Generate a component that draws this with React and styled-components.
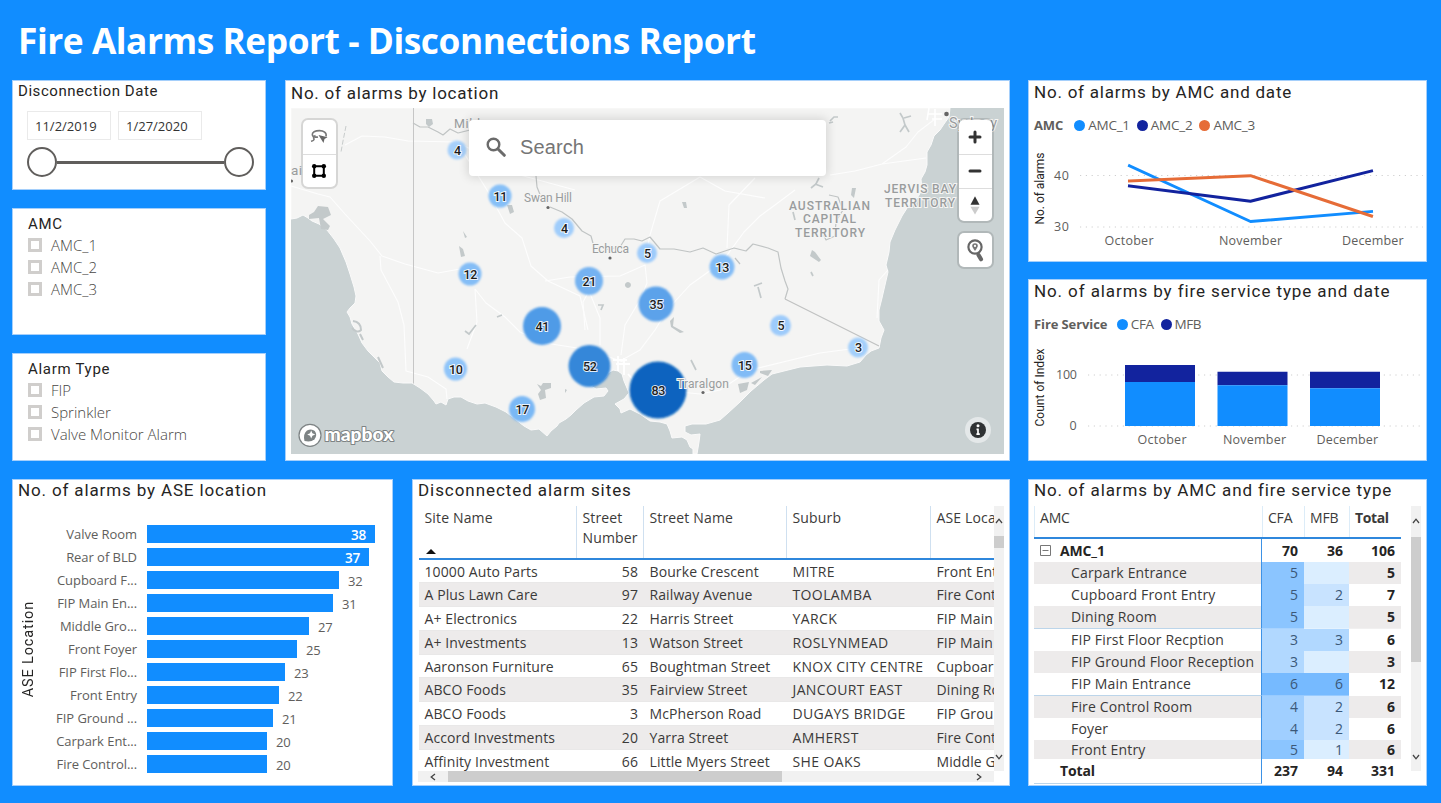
import React from "react";
import styled, { createGlobalStyle } from "styled-components";

const BLUE = "#118dff";
const NAVY = "#12239e";
const ORANGE = "#e66c37";
const UI = `"Open Sans", "Noto Sans", sans-serif`;
const DIN = `Roboto, "Liberation Sans", sans-serif`;

const GlobalStyle = createGlobalStyle`
  *, *::before, *::after { box-sizing: border-box; }
  body { margin: 0; background: ${BLUE}; overflow: hidden; }
`;

/* ---------- page frame ---------- */

const Page = styled.div`
  width: 1441px;
  height: 803px;
  display: flex;
  flex-direction: column;
  background: ${BLUE};
  font-family: ${UI};
`;

const Header = styled.header`
  height: 80px;
  flex: none;
  padding: 0 0 0 18px;
  display: flex;
  align-items: center;
`;

const Heading = styled.h1`
  margin: 0;
  font: 700 35.3px/48px ${UI};
  letter-spacing: -0.46px;
  color: #fff;
  white-space: nowrap;
`;

const Main = styled.main`
  display: flex;
  gap: 18px;
  height: 707px;
  padding: 0 14px 0 12px;
`;

const Wide = styled.div`
  width: 998px;
  display: grid;
  grid-template-rows: 381px 307px;
  row-gap: 18px;
`;

const TopRow = styled.div`
  display: grid;
  grid-template-columns: 254px 725px;
  column-gap: 19px;
`;

const BottomRow = styled.div`
  display: grid;
  grid-template-columns: 381px 598px;
  column-gap: 19px;
`;

const Filters = styled.div`
  display: grid;
  grid-template-rows: 110px 127px 108px;
  row-gap: 18px;
`;

const Side = styled.div`
  width: 399px;
  display: grid;
  grid-template-rows: 182px 183px 307px;
  row-gap: 17px;

  > :nth-child(2) { margin-bottom: 1px; }
`;

const Panel = styled.section`
  min-width: 0;
  overflow: hidden;
  background: #fff;
  border: 1px solid #a5cffb;
  display: flex;
  flex-direction: column;
`;

const Title = styled.h2`
  flex: none;
  margin: 0;
  padding: 0 0 0 ${(p) => p.$left ?? 5}px;
  height: ${(p) => p.$height ?? 24}px;
  font: 400 ${(p) => p.$size ?? 17}px/${(p) => p.$line ?? 22}px ${DIN};
  letter-spacing: ${(p) => p.$spacing ?? 0.75}px;
  color: #252423;
  white-space: nowrap;
`;

/* ---------- slicers ---------- */

const DateFields = styled.div`
  display: flex;
  gap: 7px;
  padding: 10px 0 0 14px;
`;

const DateField = styled.div`
  width: 84px;
  height: 29px;
  border: 1px solid #eaeaea;
  padding-left: 7px;
  font: 400 13px/28px ${UI};
  letter-spacing: 0;
  color: #333;
`;

const Range = styled.div`
  display: flex;
  align-items: center;
  width: 227px;
  margin: 7px 0 0 14px;
`;

const Handle = styled.span`
  width: 30px;
  height: 30px;
  flex: none;
  border: 2px solid #605e5c;
  border-radius: 50%;
  background: #fff;
`;

const Track = styled.span`
  flex: 1;
  height: 3px;
  background: #605e5c;
`;

const Options = styled.ul`
  list-style: none;
  margin: 0;
  padding: 0 0 0 15px;
`;

const Option = styled.li`
  display: flex;
  align-items: center;
  gap: 9px;
  height: 22px;
  font: 300 15px/20px ${UI};
  color: #484644;
`;

const Box = styled.span`
  width: 14px;
  height: 14px;
  border: 3px solid #d0cecc;
`;

function Slicer({ title, options }) {
  return (
    <Panel>
      <Title $left={15} $size={15} $line={30} $height={25} $spacing={0.7}>
        {title}
      </Title>
      <Options>
        {options.map((o) => (
          <Option key={o}>
            <Box />
            {o}
          </Option>
        ))}
      </Options>
    </Panel>
  );
}

/* ---------- map ---------- */

const MapFrame = styled.div`
  position: relative;
  width: 713px;
  height: 346px;
  margin: 3px 0 0 5px;
  overflow: hidden;
  background: #cad2d3;

  > svg { display: block; }
`;

const SearchBox = styled.div`
  position: absolute;
  left: 178px;
  top: 12px;
  width: 357px;
  height: 56px;
  display: flex;
  align-items: center;
  gap: 14px;
  padding: 0 0 2px 17px;
  border-radius: 4px;
  background: #fff;
  box-shadow: 0 0 10px 2px rgba(0, 0, 0, 0.12);
  font: 400 20px/54px "Liberation Sans", sans-serif;
  letter-spacing: 0.1px;
  color: #757575;
`;

const ControlGroup = styled.div`
  position: absolute;
  left: ${(p) => p.$left}px;
  top: ${(p) => p.$top}px;
  width: 33px;
  border-radius: 5px;
  background: #fff;
  box-shadow: 0 0 0 2px rgba(0, 0, 0, 0.12);
  overflow: hidden;
`;

const Control = styled.div`
  height: ${(p) => p.$height ?? 34}px;
  display: flex;
  align-items: center;
  justify-content: center;
  padding: 0 1px 1px 0;

  & + & { border-top: 1px solid #ddd; }
`;

const Info = styled.div`
  position: absolute;
  left: 674px;
  top: 309px;
  width: 26px;
  height: 26px;
  border-radius: 50%;
  background: #e4e8e9;
  display: flex;
  align-items: center;
  justify-content: center;
`;

const LAND =
  "M291 219L297 218L303 215L308 218L312 221L319 224L327 230L334 239L340 248L346 262L350 274L354 287L356 296L355 303L350 308L347 312L350 317L352 324L358 334L362 343L368 351L374 357L380 363L382 371L388 377L394 382L403 383L412 383L420 388L428 394L434 401L436 404L441 402L446 405L448 399L454 397L461 397L468 401L477 404L485 403L496 407L506 412L515 419L524 426L531 430L539 429L547 436L551 431L557 426L559 423L566 419L571 415L576 410L584 403L594 397L604 396L608 391L606 388L596 389L591 386L600 382L606 377L608 373L613 370L618 371L622 374L624 381L627 388L629 393L624 399L615 404L620 409L621 413L630 409L640 414L650 421L660 422L667 424L670 431L672 438L682 437L687 440L690 447L693 449L693 454L697 454L699 442L700 434L691 435L685 432L685 426L692 424L706 424L720 420L728 413L740 402L751 391L764 380L772 374L784 371L800 367L827 365L847 366L860 362L866 355L871 351L879 348L881 338L884 330L879 321L879 310L882 298L885 285L888 272L886 265L889 252L890 242L895 230L902 216L909 205L916 200L922 190L921 179L925 172L927 165L927 152L931 145L934 136L940 130L944 124L949 117L950 108H291Z";

const ROADS = [
  "M291 186L318 194L330 197L345 214L370 241L382 256L405 264L438 273L460 269",
  "M345 145L362 136L385 137L408 141L457 142L520 175L575 190",
  "M457 142L487 190L505 223L522 238L531 266L548 281L580 296L588 330",
  "M380 256L381 270L398 302L404 325L406 371L428 377L446 389L447 399",
  "M475 289L486 303L505 317L520 332L545 343L590 350L623 362",
  "M475 289L477 322L467 349M545 281L570 277L620 276L645 265L647 283L640 300L625 325L621 355",
  "M622 360L640 350L655 330L668 309L690 285L722 262L744 232L760 216L775 205L795 190",
  "M700 177L660 201L650 235L645 260M700 177L725 191L765 198M727 248L729 205L755 178",
  "M830 175L855 171L882 164L906 147L918 132L935 119M882 164L926 158",
  "M585 330L583 302L589 291L600 318L600 345M660 390L700 394L720 390L750 370L820 353L850 349",
  "M888 270L879 280L877 318",
];

const RIVERS = [
  "M413 123L420 127L428 127L438 132L443 135L450 129L458 133L470 130",
  "M536 176L537 187L541 197M550 207L562 212L572 219L582 231L591 236L594 247L602 252",
  "M604 250L620 247L625 239L634 239L642 241L650 237L660 249L674 249L690 252L703 248L716 254L734 248L746 251L753 244L768 248L778 252L781 268L785 281L788 289L785 299",
  "M735 258L740 264M829 195L838 197L843 210L836 221L835 236L826 240L820 227",
];

const LAKES = [
  "M319 218L309 219L309 215L314 212L318 206L328 207L331 215L323 219L330 226L328 230L321 229Z",
  "M426 119L432 119L433 124L429 127L426 124ZM507 205L512 205L514 212L510 214ZM463 231L467 237L465 238ZM459 246L463 249L465 256L461 257Z",
  "M537 384L541 386L543 383L551 383L551 388L545 390L546 398L540 400L538 394L541 390ZM565 389L567 390L565 393ZM628 282A3 3 0 1 1 627.9 282Z",
  "M670 321L674 317L673 326L684 332L680 333L671 327ZM738 384L749 382L747 390L740 393ZM751 383L762 377L755 385ZM760 371L772 370L768 376L760 373Z",
  "M682 202L686 202L687 208L684 208ZM852 188L856 188L854 198L851 195ZM812 250L815 252L821 260L819 262L810 256Z",
];

const CREEKS =
  "M830 121L834 117L838 117M833 122L829 123M900 113L903 118L905 125L900 132M904 118L911 116M905 125L909 132M811 188L816 184L819 178M815 184L823 187M793 212L795 220M811 272L813 276M754 286L762 283M758 287L761 298M598 305L603 305L601 310M465 331L469 334L476 325M497 317L502 315M691 360L696 370";

const CLUSTERS = [
  [457, 150, 4, 10, "#a6d0fb"],
  [500, 196, 11, 12, "#86bff7"],
  [564, 228, 4, 10.5, "#a0cdfb"],
  [470, 274, 12, 12, "#84bdf6"],
  [589, 281, 21, 14.5, "#74b2f1"],
  [647, 253, 5, 10.5, "#9dcbfb"],
  [722, 267, 13, 13, "#82bcf6"],
  [656, 304, 35, 18, "#5ba2ea"],
  [542, 326, 41, 19.5, "#4f9be7"],
  [589.5, 366, 52, 21.5, "#3587d9"],
  [658, 390, 83, 29, "#0764bf"],
  [455.5, 369, 10, 12, "#8fc4f9"],
  [522, 409, 17, 13.5, "#7ab8f5"],
  [780.5, 325.5, 5, 11, "#9dcbfb"],
  [744.5, 365, 15, 13.5, "#80bbf6"],
  [858, 347.5, 3, 10.5, "#a3cffb"],
];

function Label({ x, y, w, children, size = 12, weight = 400, fill = "#999c9d" }) {
  return (
    <text
      x={x}
      y={y}
      textLength={w}
      fontFamily={DIN}
      fontSize={size}
      fontWeight={weight}
      fill={fill}
      stroke="#f5f5f4"
      strokeWidth="2"
      paintOrder="stroke"
    >
      {children}
    </text>
  );
}

function MapDrawing() {
  return (
    <svg width="713" height="346" viewBox="291 108 713 346">
      <defs>
        <filter id="soft" x="-20%" y="-20%" width="140%" height="140%">
          <feGaussianBlur stdDeviation="1.1" />
        </filter>
      </defs>
      <path d={LAND} fill="#f4f4f3" stroke="#fafafa" strokeWidth="1" />
      <g fill="none" stroke="#fdfdfd" strokeWidth="1.1" strokeLinejoin="round">
        {ROADS.map((d) => <path key={d} d={d} />)}
      </g>
      <g fill="none" stroke="#fff">
        <path d="M613 360H627M616 364H630M618 356V371M624 358V375M628 374L636 383" strokeWidth="1.8" />
        <path d="M928 114H942M932 119H942M935 109V126M929 108L927 120" strokeWidth="1.6" />
      </g>
      <path d="M413.5 108V383.5" stroke="#c6c6c6" fill="none" />
      <path d="M785 299L879 346" stroke="#bfc0c0" fill="none" strokeWidth="1.2" />
      <path d="M346 126L343 141L341 152" stroke="#c8cccc" fill="none" strokeDasharray="5 2" />
      <g fill="none" stroke="#c0c4c4" strokeWidth="1.2" strokeLinejoin="round">
        {RIVERS.map((d) => <path key={d} d={d} />)}
      </g>
      <g fill="#c3c9ca">
        {LAKES.map((d) => <path key={d} d={d} />)}
        <path d={CREEKS} fill="none" stroke="#c3c9ca" strokeWidth="1.7" />
        <path d="M353 321Q361 322 361 330Q357 334 352 328M360 334L363 340M378 357L383 368" fill="none" stroke="#c3c9ca" strokeWidth="2" />
      </g>

      {CLUSTERS.map(([x, y, n, r, fill]) => (
        <circle key={`${x}-${y}`} cx={x} cy={y} r={r - 0.5} fill={fill} filter="url(#soft)" />
      ))}

      <Label x={454} y={128} w={46} size={12.5}>Mildura</Label>
      <Label x={291} y={175} w={27} size={13.5}>aide</Label>
      <Label x={524} y={202} w={48}>Swan Hill</Label>
      <Label x={592} y={253} w={37}>Echuca</Label>
      <Label x={677} y={388} w={52}>Traralgon</Label>
      <Label x={949} y={128} w={48} size={14.5}>Sydney</Label>
      <Label x={789} y={210} w={81} weight={500}>AUSTRALIAN</Label>
      <Label x={803} y={223} w={53} weight={500}>CAPITAL</Label>
      <Label x={795} y={237} w={70} weight={500}>TERRITORY</Label>
      <Label x={884} y={193} w={72} weight={500}>JERVIS BAY</Label>
      <Label x={885} y={206.5} w={70} weight={500}>TERRITORY</Label>
      <g fill="#666">
        <circle cx="548" cy="207.5" r="1.6" />
        <circle cx="610" cy="258" r="1.6" />
        <circle cx="703" cy="392.5" r="1.6" />
        <circle cx="946.5" cy="114" r="2.3" />
        <circle cx="291.5" cy="181" r="1.6" />
      </g>

      {CLUSTERS.map(([x, y, n]) => (
        <text
          key={`${x}-${y}`}
          x={x + 0.3}
          y={y + 4.5}
          textAnchor="middle"
          fontFamily={DIN}
          fontWeight="500"
          fontSize="12.5"
          letterSpacing="-0.3"
          fill="#1c1c1c"
          stroke="#fff"
          strokeOpacity="0.85"
          strokeWidth="2"
          paintOrder="stroke"
        >
          {n}
        </text>
      ))}

      <g>
        <circle cx="310" cy="435.3" r="11" fill="#fff" stroke="#7d8384" strokeWidth="1.2" />
        <path d="M304.5 441Q302.8 434 307 430.6Q311.5 428 314.8 431Q317.8 435 314.5 439.3Q311 442.5 304.5 441Z" fill="#7d8384" />
        <path d="M311.2 430.5L312.4 433.3L315.2 434.5L312.4 435.7L311.2 438.5L310 435.7L307.2 434.5L310 433.3Z" fill="#fff" />
        <text
          x="324.5"
          y="440.5"
          textLength="69"
          lengthAdjust="spacingAndGlyphs"
          fontFamily="Lato, sans-serif"
          fontWeight="900"
          fontSize="18.5"
          fill="#fff"
          stroke="#7d8384"
          strokeWidth="2"
          strokeLinejoin="round"
          paintOrder="stroke"
        >
          mapbox
        </text>
      </g>
    </svg>
  );
}

function AlarmMap() {
  return (
    <Panel>
      <Title $line={24} $spacing={0.76}>No. of alarms by location</Title>
      <MapFrame>
        <MapDrawing />
        <SearchBox>
          <svg width="20" height="20" viewBox="0 0 20 20" fill="none" stroke="#6b6b6b">
            <circle cx="7.5" cy="7.5" r="5.8" strokeWidth="2.4" />
            <path d="M12 12L18.3 18.3" strokeWidth="3" strokeLinecap="round" />
          </svg>
          Search
        </SearchBox>
        <ControlGroup $left={12} $top={12}>
          <Control>
            <svg width="20" height="18" viewBox="0 0 20 18" fill="none" stroke="#777" strokeWidth="1.6">
              <path d="M17 8.5C18 4.8 14.5 2.6 10.5 2.6C6 2.6 3 4.3 3.3 6.8C3.6 9 7 9.4 9 9" />
              <path d="M6.5 7.5Q3.5 9 5 10.8Q5.5 12.5 2 13.2" />
              <path d="M9.5 7L18.5 9.3L15.5 11L14.5 15Z" fill="#666" stroke="none" />
            </svg>
          </Control>
          <Control $height={33}>
            <svg width="16" height="16" viewBox="0 0 16 16">
              <path d="M3.2 3.2H12.8V12.8H3.2Z" fill="none" stroke="#000" strokeWidth="2" />
              <g fill="#000">
                <circle cx="3.2" cy="3.2" r="2.2" />
                <circle cx="12.8" cy="3.2" r="2.2" />
                <circle cx="3.2" cy="12.8" r="2.2" />
                <circle cx="12.8" cy="12.8" r="2.2" />
              </g>
            </svg>
          </Control>
        </ControlGroup>
        <ControlGroup $left={668} $top={12}>
          <Control>
            <svg width="16" height="16" viewBox="0 0 16 16" stroke="#333" strokeWidth="3" strokeLinecap="round">
              <path d="M3 8H13M8 3V13" />
            </svg>
          </Control>
          <Control>
            <svg width="16" height="16" viewBox="0 0 16 16" stroke="#333" strokeWidth="3" strokeLinecap="round">
              <path d="M3 8H13" />
            </svg>
          </Control>
          <Control $height={33}>
            <svg width="12" height="20" viewBox="0 0 12 20">
              <path d="M1.5 9.8L6 1.3L10.5 9.8Z" fill="#333" />
              <path d="M1.5 11.8L6 19.5L10.5 11.8Z" fill="#ccc" />
            </svg>
          </Control>
        </ControlGroup>
        <ControlGroup $left={668} $top={125}>
          <Control>
            <svg width="20" height="24" viewBox="0 0 20 24" fill="none">
              <circle cx="10" cy="9" r="6.6" stroke="#666" strokeWidth="2.2" />
              <path d="M13.5 17L16 21.2" stroke="#666" strokeWidth="4.2" strokeLinecap="round" />
              <path d="M10 13Q7.2 9.2 7.2 8A2.8 2.8 0 0 1 12.8 8Q12.8 9.2 10 13Z" fill="#777" />
              <circle cx="10" cy="7.9" r="1.1" fill="#fff" />
            </svg>
          </Control>
        </ControlGroup>
        <Info>
          <svg width="16" height="16" viewBox="0 0 16 16">
            <circle cx="8" cy="8" r="8" fill="#2f3234" />
            <path d="M8 6.8V12.2M6.5 7.3H8.6M6.4 12.2H9.8" stroke="#fff" strokeWidth="1.7" />
            <circle cx="8" cy="3.7" r="1.5" fill="#fff" />
          </svg>
        </Info>
      </MapFrame>
    </Panel>
  );
}

/* ---------- horizontal bars ---------- */

const BarBody = styled.div`
  display: grid;
  grid-template-columns: 31px 83px 1fr;
  column-gap: 10px;
  padding-top: 20.5px;
`;

const AxisTitle = styled.div`
  writing-mode: vertical-rl;
  transform: rotate(180deg);
  justify-self: center;
  align-self: center;
  margin-top: -4px;
  font: 400 14.5px/18px ${DIN};
  letter-spacing: 0.85px;
  color: #252423;
`;

const BarLabel = styled.div`
  height: 23.05px;
  display: flex;
  justify-content: flex-end;
  font: 400 13px/19px ${UI};
  letter-spacing: -0.05px;
  color: #605e5c;
  white-space: nowrap;
`;

const BarTrack = styled.div`
  height: 23.05px;
  display: flex;
`;

const Bar = styled.div`
  height: 18px;
  background: ${BLUE};
  padding-right: 9px;
  text-align: right;
  font: 600 13.5px/21px ${UI};
  letter-spacing: -0.2px;
  color: #fff;
`;

const BarValue = styled.span`
  padding-left: 9px;
  font: 400 13px/20px ${UI};
  letter-spacing: -0.2px;
  color: #605e5c;
`;

const ASE = [
  ["Valve Room", 38],
  ["Rear of BLD", 37],
  ["Cupboard F...", 32],
  ["FIP Main En...", 31],
  ["Middle Gro...", 27],
  ["Front Foyer", 25],
  ["FIP First Flo...", 23],
  ["Front Entry", 22],
  ["FIP Ground ...", 21],
  ["Carpark Ent...", 20],
  ["Fire Control...", 20],
];

function AseChart() {
  return (
    <Panel>
      <Title $line={20} $spacing={0.86}>No. of alarms by ASE location</Title>
      <BarBody>
        <AxisTitle>ASE Location</AxisTitle>
        <div>
          {ASE.map(([name]) => <BarLabel key={name}>{name}</BarLabel>)}
        </div>
        <div>
          {ASE.map(([name, value]) => (
            <BarTrack key={name}>
              <Bar style={{ width: value * 6 }}>{value > 35 ? value : null}</Bar>
              {value > 35 ? null : <BarValue>{value}</BarValue>}
            </BarTrack>
          ))}
        </div>
      </BarBody>
    </Panel>
  );
}

/* ---------- shared scroll bar ---------- */

const ScrollY = styled.div`
  width: 10px;
  height: 265px;
  background: #f1f1f1;
  display: flex;
  flex-direction: column;
  justify-content: space-between;
  align-items: center;
  padding: 12px 0 11px;
  position: relative;

  &::after {
    content: "";
    position: absolute;
    left: 0;
    top: ${(p) => p.$thumbTop}px;
    width: 10px;
    height: ${(p) => p.$thumb}px;
    background: #cdcdcd;
  }
`;

function Chevron({ turn = 0 }) {
  return (
    <svg width="8" height="6" viewBox="0 0 8 6" fill="none" stroke="#444" strokeWidth="1.3" transform={`rotate(${turn})`}>
      <path d="M1 5L4 1.2L7 5" />
    </svg>
  );
}

/* ---------- sites table ---------- */

const TableArea = styled.div`
  display: grid;
  grid-template-columns: 576px 10px;
  grid-template-rows: 265px 11px;
  margin: 2px 0 0 5px;
`;

const Sites = styled.div`
  overflow: hidden;
  padding-left: 1px;
`;

const SiteRow = styled.div`
  display: grid;
  grid-template-columns: 158px 67px 143px 144px 120px;
  width: 632px;
  height: 23.75px;
  background: ${(p) => (p.$shade ? "#edebeb" : "#fff")};
  border-bottom: 1px solid #e9e8e8;
`;

const SiteHead = styled(SiteRow)`
  height: 53.6px;
  border-bottom: 2px solid #2f87dc;
`;

const HeadCell = styled.div`
  padding: 2px 5px 0 5.5px;
  border-right: 1px solid #cfe0f0;
  font: 400 14px/20px ${UI};
  letter-spacing: 0.15px;
  color: #3b3a39;
`;

const SortMark = styled.span`
  display: block;
  width: 0;
  margin: 21px 0 0 1px;
  border: 5px solid transparent;
  border-top: 0;
  border-bottom-color: #111;
`;

const SiteCell = styled.div`
  padding: 0 6px 0 5.5px;
  text-align: ${(p) => (p.$right ? "right" : "left")};
  font: 400 14px/24px ${UI};
  letter-spacing: ${(p) => (p.$caps ? 0.38 : 0.1)}px;
  color: #3b3a39;
  white-space: nowrap;
`;

const ScrollX = styled.div`
  display: flex;
  align-items: center;
  justify-content: space-between;
  padding: 0 11px;
  background: #f1f1f1;
  position: relative;

  &::after {
    content: "";
    position: absolute;
    left: 30px;
    top: 0;
    width: 334px;
    height: 11px;
    background: #cdcdcd;
  }
`;

const SITES = [
  ["10000 Auto Parts", 58, "Bourke Crescent", "MITRE", "Front Entry"],
  ["A Plus Lawn Care", 97, "Railway Avenue", "TOOLAMBA", "Fire Control"],
  ["A+ Electronics", 22, "Harris Street", "YARCK", "FIP Main E"],
  ["A+ Investments", 13, "Watson Street", "ROSLYNMEAD", "FIP Main E"],
  ["Aaronson Furniture", 65, "Boughtman Street", "KNOX CITY CENTRE", "Cupboard"],
  ["ABCO Foods", 35, "Fairview Street", "JANCOURT EAST", "Dining Room"],
  ["ABCO Foods", 3, "McPherson Road", "DUGAYS BRIDGE", "FIP Ground"],
  ["Accord Investments", 20, "Yarra Street", "AMHERST", "Fire Control"],
  ["Affinity Investment", 66, "Little Myers Street", "SHE OAKS", "Middle Gro"],
];

function SitesTable() {
  return (
    <Panel>
      <Title $line={20} $spacing={0.93}>Disconnected alarm sites</Title>
      <TableArea>
        <Sites>
          <SiteHead>
            <HeadCell>
              Site Name
              <SortMark />
            </HeadCell>
            <HeadCell>Street Number</HeadCell>
            <HeadCell>Street Name</HeadCell>
            <HeadCell>Suburb</HeadCell>
            <HeadCell>ASE Location</HeadCell>
          </SiteHead>
          {SITES.map(([site, no, street, suburb, ase], i) => (
            <SiteRow key={i} $shade={i % 2 === 1}>
              <SiteCell>{site}</SiteCell>
              <SiteCell $right>{no}</SiteCell>
              <SiteCell>{street}</SiteCell>
              <SiteCell $caps>{suburb}</SiteCell>
              <SiteCell>{ase}</SiteCell>
            </SiteRow>
          ))}
        </Sites>
        <ScrollY $thumbTop={30} $thumb={12}>
          <Chevron />
          <Chevron turn={180} />
        </ScrollY>
        <ScrollX>
          <Chevron turn={-90} />
          <Chevron turn={90} />
        </ScrollX>
      </TableArea>
    </Panel>
  );
}

/* ---------- matrix ---------- */

const MatrixArea = styled.div`
  display: grid;
  grid-template-columns: 367px 10px;
  column-gap: 10px;
  margin: 2px 0 0 5px;
`;

const MatrixRow = styled.div`
  display: grid;
  grid-template-columns: 228px 42px 45px 52px;
  height: ${(p) => p.$height ?? 22.35}px;
  font: 400 14px/${(p) => p.$line ?? 22}px ${UI};
  color: #3b3a39;
  white-space: nowrap;
`;

const MatrixHead = styled(MatrixRow)`
  height: 33px;
  line-height: 24px;
  border-bottom: 2px solid #2f87dc;
`;

const HeadLabel = styled.div`
  padding-left: 5px;
  border-left: 1px solid #dcecf8;
  font-weight: ${(p) => (p.$bold ? 700 : 400)};
  letter-spacing: ${(p) => (p.$bold ? -0.4 : -0.2)}px;
`;

const MatrixBody = styled.div`
  height: 219.5px;
  overflow: hidden;
`;

const RowLabel = styled.div`
  display: flex;
  align-items: center;
  gap: 9px;
  padding-left: ${(p) => p.$indent ?? 37}px;
  border-right: 1px solid #3d92e6;
  border-bottom: 1px solid ${(p) => (p.$plain ? "transparent" : "#bcd5ea")};
  background: ${(p) => (p.$shade ? "#edebeb" : "#fff")};
  font-weight: ${(p) => (p.$bold ? 700 : 400)};
  letter-spacing: ${(p) => (p.$bold ? -0.15 : 0.16)}px;
  color: ${(p) => (p.$bold ? "#252423" : "#3b3a39")};
`;

const Num = styled.div`
  padding-right: 6px;
  text-align: right;
  background: ${(p) => p.$bg ?? "#fff"};
  border-bottom: 1px solid rgba(255, 255, 255, 0.25);
  font-weight: ${(p) => (p.$bold ? 700 : 400)};
  color: ${(p) => (p.$bold ? "#252423" : "#3b5878")};
`;

const HEAT = { 0: "#dbeeff", 1: "#dbeeff", 2: "#c8e3ff", 3: "#b1d8ff", 4: "#a0cfff", 5: "#8bc5ff", 6: "#76baff" };

const MATRIX = [
  ["Carpark Entrance", 5, 0, 5],
  ["Cupboard Front Entry", 5, 2, 7],
  ["Dining Room", 5, 0, 5],
  ["FIP First Floor Recption", 3, 3, 6],
  ["FIP Ground Floor Reception", 3, 0, 3],
  ["FIP Main Entrance", 6, 6, 12],
  ["Fire Control Room", 4, 2, 6],
  ["Foyer", 4, 2, 6],
  ["Front Entry", 5, 1, 6],
];

function Matrix() {
  return (
    <Panel>
      <Title $line={20} $spacing={0.88}>No. of alarms by AMC and fire service type</Title>
      <MatrixArea>
        <div>
          <MatrixHead>
            <HeadLabel>AMC</HeadLabel>
            <HeadLabel>CFA</HeadLabel>
            <HeadLabel>MFB</HeadLabel>
            <HeadLabel $bold>Total</HeadLabel>
          </MatrixHead>
          <MatrixBody>
            <MatrixRow $height={22.6} $line={23}>
              <RowLabel $bold $indent={6}>
                <svg width="11" height="11" viewBox="0 0 11 11" fill="none" stroke="#777">
                  <path d="M0.5 0.5H10.5V10.5H0.5ZM2.5 5.5H8.5" />
                </svg>
                AMC_1
              </RowLabel>
              <Num $bold>70</Num>
              <Num $bold>36</Num>
              <Num $bold>106</Num>
            </MatrixRow>
            {MATRIX.map(([name, cfa, mfb, total], i) => (
              <MatrixRow key={name} $line={i === 8 ? 20 : 22} $height={i === 8 ? 19 : 22.35}>
                <RowLabel $shade={i % 2 === 0} $plain={i === 8}>{name}</RowLabel>
                <Num $bg={HEAT[cfa]}>{cfa}</Num>
                <Num $bg={HEAT[mfb]}>{mfb || ""}</Num>
                <Num $bold $bg={i % 2 === 0 ? "#edebeb" : "#fff"}>{total}</Num>
              </MatrixRow>
            ))}
          </MatrixBody>
          <MatrixRow $height={23} $line={24}>
            <RowLabel $bold $indent={26}>Total</RowLabel>
            <Num $bold>237</Num>
            <Num $bold>94</Num>
            <Num $bold>331</Num>
          </MatrixRow>
        </div>
        <ScrollY $thumbTop={31} $thumb={125}>
          <Chevron />
          <Chevron turn={180} />
        </ScrollY>
      </MatrixArea>
    </Panel>
  );
}

/* ---------- line and column charts ---------- */

const Legend = styled.div`
  display: flex;
  flex: none;
  align-items: center;
  height: 20px;
  margin: 10px 0 0 5px;
  gap: 7px;
  font: 400 13.5px/20px ${UI};
  letter-spacing: ${(p) => p.$spacing}px;
  color: #605e5c;

  b {
    margin-right: ${(p) => p.$lead}px;
    font-size: 13px;
    letter-spacing: -0.1px;
  }
`;

const Key = styled.span`
  display: flex;
  align-items: center;
  gap: 3px;

  &::before {
    content: "";
    width: 11px;
    height: 11px;
    border-radius: 50%;
    background: ${(p) => p.$color};
  }
`;

const Plot = styled.svg`
  display: block;
  flex: none;

  text {
    font-family: ${UI};
    font-size: 12.5px;
    fill: #605e5c;
  }

  text.axis {
    font-family: ${DIN};
    font-size: 12px;
    fill: #252423;
  }
`;

function LineChart() {
  return (
    <Panel>
      <Title $spacing={0.78}>No. of alarms by AMC and date</Title>
      <Legend $spacing={-0.25} $lead={4}>
        <b>AMC</b>
        <Key $color={BLUE}>AMC_1</Key>
        <Key $color={NAVY}>AMC_2</Key>
        <Key $color={ORANGE}>AMC_3</Key>
      </Legend>
      <Plot width="397" height="124" viewBox="1029 135 397 124">
        <g stroke="#cfcfcf" strokeDasharray="1.2 4.6" fill="none">
          <path d="M1080 175.5H1423M1080 227H1423" />
        </g>
        <text className="axis" transform="translate(1044 224.5) rotate(-90)" textLength="72">No. of alarms</text>
        <text x="1054" y="180" textLength="15">40</text>
        <text x="1054" y="231" textLength="15">30</text>
        <text x="1104.5" y="245" textLength="49">October</text>
        <text x="1219" y="245" textLength="63">November</text>
        <text x="1342" y="245" textLength="61.5">December</text>
        <g fill="none" strokeWidth="3" strokeLinejoin="round" strokeLinecap="square">
          <path d="M1129.5 165.8L1250.5 221.5L1371.5 211.5" stroke={BLUE} />
          <path d="M1129.5 186L1250.5 201.2L1371.5 171" stroke={NAVY} />
          <path d="M1129.5 181L1250.5 175.7L1371.5 216" stroke={ORANGE} />
        </g>
      </Plot>
    </Panel>
  );
}

const COLUMNS = [
  [1125, 365, 382],
  [1217.5, 371.7, 385.3],
  [1310, 371.7, 388.3],
];

function ColumnChart() {
  return (
    <Panel>
      <Title $spacing={0.9}>No. of alarms by fire service type and date</Title>
      <Legend $spacing={-0.45} $lead={2.5}>
        <b>Fire Service</b>
        <Key $color={BLUE}>CFA</Key>
        <Key $color={NAVY}>MFB</Key>
      </Legend>
      <Plot width="397" height="124" viewBox="1029 334 397 124">
        <g stroke="#cfcfcf" strokeDasharray="1.2 4.6" fill="none">
          <path d="M1088 375H1423M1088 426H1423" />
        </g>
        <text className="axis" transform="translate(1044 426.5) rotate(-90)" textLength="78">Count of Index</text>
        <text x="1056" y="379" textLength="21">100</text>
        <text x="1069.5" y="430" textLength="7.5">0</text>
        {COLUMNS.map(([x, top, split]) => (
          <g key={x}>
            <path d={`M${x} ${top}h70V${split}h-70Z`} fill={NAVY} />
            <path d={`M${x} ${split}h70V426h-70Z`} fill={BLUE} />
          </g>
        ))}
        <text x="1137.5" y="444" textLength="49">October</text>
        <text x="1223" y="444" textLength="63">November</text>
        <text x="1316.5" y="444" textLength="61.5">December</text>
      </Plot>
    </Panel>
  );
}

export default function App() {
  return (
    <Page>
      <GlobalStyle />
      <Header>
        <Heading>Fire Alarms Report - Disconnections Report</Heading>
      </Header>
      <Main>
        <Wide>
          <TopRow>
            <Filters>
              <Panel>
                <Title $size={15} $line={20} $height={20} $spacing={0.55}>Disconnection Date</Title>
                <DateFields>
                  <DateField>11/2/2019</DateField>
                  <DateField>1/27/2020</DateField>
                </DateFields>
                <Range>
                  <Handle />
                  <Track />
                  <Handle />
                </Range>
              </Panel>
              <Slicer title="AMC" options={["AMC_1", "AMC_2", "AMC_3"]} />
              <Slicer title="Alarm Type" options={["FIP", "Sprinkler", "Valve Monitor Alarm"]} />
            </Filters>
            <AlarmMap />
          </TopRow>
          <BottomRow>
            <AseChart />
            <SitesTable />
          </BottomRow>
        </Wide>
        <Side>
          <LineChart />
          <ColumnChart />
          <Matrix />
        </Side>
      </Main>
    </Page>
  );
}
